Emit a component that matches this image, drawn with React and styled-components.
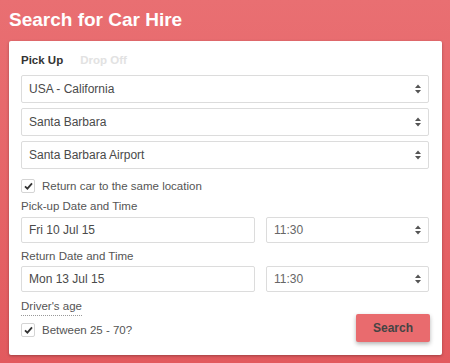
import styled, { createGlobalStyle } from "styled-components";

const GlobalStyle = createGlobalStyle`
  html, body {
    margin: 0;
    padding: 0;
  }
  body {
    font-family: "Liberation Sans", Arial, sans-serif;
  }
`;

const Page = styled.div`
  width: 450px;
  height: 363px;
  box-sizing: border-box;
  padding: 8px 8px 0 9px;
  background: linear-gradient(#e96f72, #e25a5e);
`;

const Title = styled.h1`
  margin: 0 0 9px;
  font-size: 19px;
  line-height: 24px;
  font-weight: bold;
  color: #fff;
`;

const Card = styled.div`
  background: #fff;
  border-radius: 2px;
  box-shadow: 0 1px 3px rgba(0, 0, 0, 0.3);
  padding: 12px 13px 13px 12px;
`;

const Tabs = styled.div`
  display: flex;
  gap: 17px;
  margin-bottom: 7px;
`;

const Tab = styled.span`
  font-size: 11.5px;
  line-height: 15px;
  font-weight: bold;
  color: ${(p) => (p.$active ? "#333" : "#e2e2e2")};
`;

const Stack = styled.div`
  display: flex;
  flex-direction: column;
  gap: 5px;
`;

const SelectWrap = styled.div`
  position: relative;
`;

const Field = styled.div`
  box-sizing: border-box;
  height: ${(p) => p.$h || 28}px;
  border: 1px solid #dcdcdc;
  border-radius: 2px;
  padding: 0 7px;
  display: flex;
  align-items: center;
  font-size: 12px;
  color: ${(p) => p.$color || "#4a4a4a"};
  background: #fff;
`;

const Arrow = styled.svg`
  position: absolute;
  right: 8px;
  top: 50%;
  margin-top: -5px;
`;

const CheckRow = styled.label`
  display: flex;
  align-items: center;
  gap: 7px;
  height: 14px;
  font-size: 11.5px;
  color: #555;
  margin-top: ${(p) => p.$mt || 0}px;
`;

const Box = styled.span`
  box-sizing: border-box;
  width: 14px;
  height: 14px;
  border: 1px solid #d4d4d4;
  border-radius: 2px;
  display: flex;
  align-items: center;
  justify-content: center;
`;

const Label = styled.div`
  font-size: 11.5px;
  line-height: 15px;
  color: #555;
  margin-top: ${(p) => p.$mt || 0}px;
  margin-bottom: ${(p) => p.$mb || 3}px;
`;

const DateRow = styled.div`
  display: grid;
  grid-template-columns: 234px 1fr;
  gap: 11px;
`;

const Footer = styled.div`
  display: flex;
  justify-content: space-between;
  align-items: flex-end;
  margin-top: 4px;
`;

const AgeColumn = styled.div`
  padding-bottom: 5px;
`;

const AgeLabel = styled.span`
  display: inline-block;
  font-size: 11.5px;
  line-height: 15px;
  color: #555;
  border-bottom: 1px dotted #999;
  padding-bottom: 1px;
`;

const SearchButton = styled.button`
  width: 74px;
  height: 28px;
  border: none;
  border-radius: 2px;
  background: #e96b6e;
  color: #444;
  font-family: inherit;
  font-size: 12px;
  font-weight: bold;
  box-shadow: 0 2px 4px rgba(0, 0, 0, 0.3);
  margin-right: -1px;
`;

const Check = () => (
  <Box>
    <svg width="9" height="8" viewBox="0 0 9 8">
      <path d="M1 4.3 L3.4 6.6 L8 1.3" fill="none" stroke="#333" strokeWidth="1.8" />
    </svg>
  </Box>
);

const Select = ({ children, color, h }) => (
  <SelectWrap>
    <Field $color={color} $h={h}>
      {children}
    </Field>
    <Arrow width="6" height="10" viewBox="0 0 6 10">
      <path d="M0 4 L3 0.5 L6 4 Z M0 6 L3 9.5 L6 6 Z" fill="#555" />
    </Arrow>
  </SelectWrap>
);

export default function App() {
  return (
    <>
      <GlobalStyle />
      <Page>
        <Title>Search for Car Hire</Title>
        <Card>
          <Tabs>
            <Tab $active>Pick Up</Tab>
            <Tab>Drop Off</Tab>
          </Tabs>
          <Stack>
            <Select>USA - California</Select>
            <Select>Santa Barbara</Select>
            <Select>Santa Barbara Airport</Select>
          </Stack>
          <CheckRow $mt={10}>
            <Check />
            Return car to the same location
          </CheckRow>
          <Label $mt={6}>Pick-up Date and Time</Label>
          <DateRow>
            <Field $h={26}>Fri 10 Jul 15</Field>
            <Select color="#666" h={26}>
              11:30
            </Select>
          </DateRow>
          <Label $mt={6} $mb={2}>
            Return Date and Time
          </Label>
          <DateRow>
            <Field $h={26}>Mon 13 Jul 15</Field>
            <Select color="#666" h={26}>
              11:30
            </Select>
          </DateRow>
          <Footer>
            <AgeColumn>
              <AgeLabel>Driver's age</AgeLabel>
              <CheckRow $mt={7}>
                <Check />
                Between 25 - 70?
              </CheckRow>
            </AgeColumn>
            <SearchButton>Search</SearchButton>
          </Footer>
        </Card>
      </Page>
    </>
  );
}
